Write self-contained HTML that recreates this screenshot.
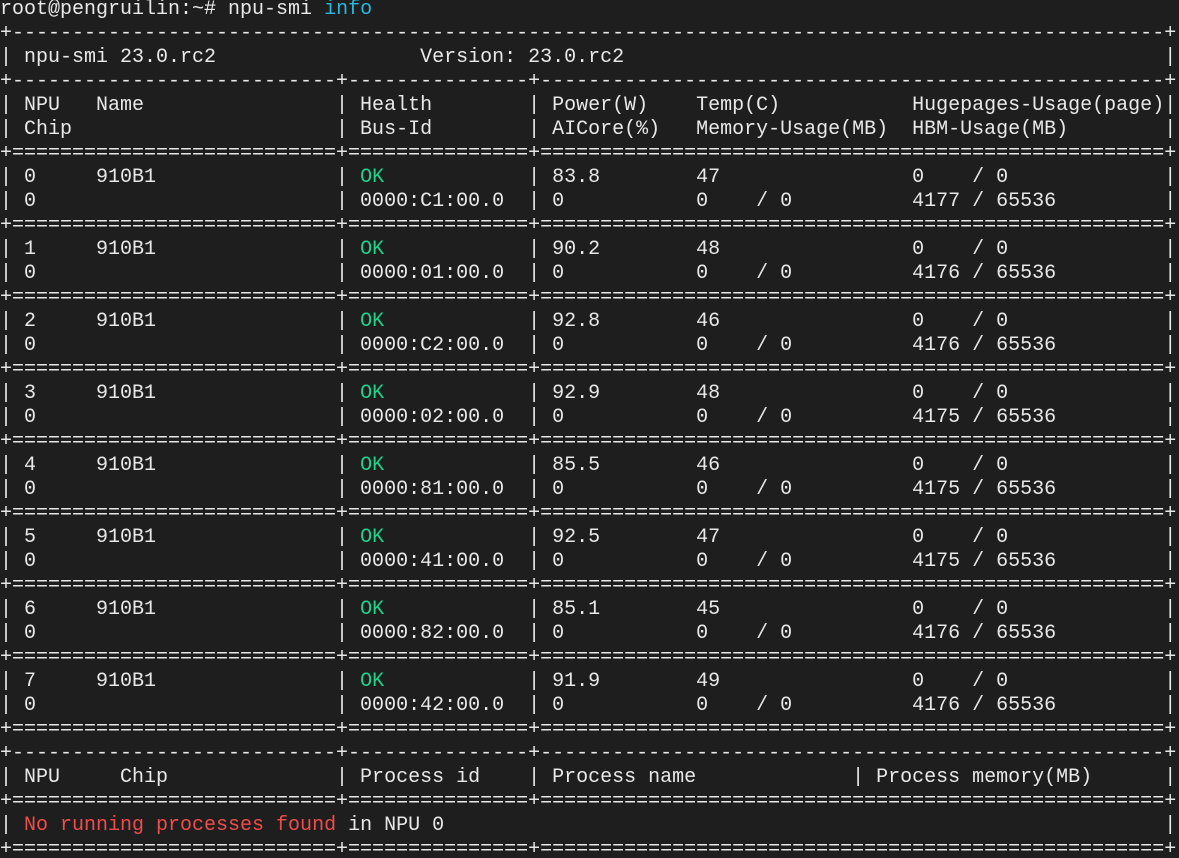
<!DOCTYPE html>
<html><head><meta charset="utf-8"><style>
html,body{margin:0;padding:0;background:#1e1e1e;width:1179px;height:858px;overflow:hidden}
pre{margin:-2px 0 0 0;padding:0;font-family:"Liberation Mono",monospace;font-size:20px;line-height:24px;color:#e8e8e8;white-space:pre}
.g{color:#23d18b}.b{color:#29b8db}.r{color:#f14c4c}
</style></head><body><pre>root@pengruilin:~# npu-smi <span class="b">info</span>
+------------------------------------------------------------------------------------------------+
| npu-smi 23.0.rc2                 Version: 23.0.rc2                                             |
+---------------------------+---------------+----------------------------------------------------+
| NPU   Name                | Health        | Power(W)    Temp(C)           Hugepages-Usage(page)|
| Chip                      | Bus-Id        | AICore(%)   Memory-Usage(MB)  HBM-Usage(MB)        |
+===========================+===============+====================================================+
| 0     910B1               | <span class="g">OK</span>            | 83.8        47                0    / 0             |
| 0                         | 0000:C1:00.0  | 0           0    / 0          4177 / 65536         |
+===========================+===============+====================================================+
| 1     910B1               | <span class="g">OK</span>            | 90.2        48                0    / 0             |
| 0                         | 0000:01:00.0  | 0           0    / 0          4176 / 65536         |
+===========================+===============+====================================================+
| 2     910B1               | <span class="g">OK</span>            | 92.8        46                0    / 0             |
| 0                         | 0000:C2:00.0  | 0           0    / 0          4176 / 65536         |
+===========================+===============+====================================================+
| 3     910B1               | <span class="g">OK</span>            | 92.9        48                0    / 0             |
| 0                         | 0000:02:00.0  | 0           0    / 0          4175 / 65536         |
+===========================+===============+====================================================+
| 4     910B1               | <span class="g">OK</span>            | 85.5        46                0    / 0             |
| 0                         | 0000:81:00.0  | 0           0    / 0          4175 / 65536         |
+===========================+===============+====================================================+
| 5     910B1               | <span class="g">OK</span>            | 92.5        47                0    / 0             |
| 0                         | 0000:41:00.0  | 0           0    / 0          4175 / 65536         |
+===========================+===============+====================================================+
| 6     910B1               | <span class="g">OK</span>            | 85.1        45                0    / 0             |
| 0                         | 0000:82:00.0  | 0           0    / 0          4176 / 65536         |
+===========================+===============+====================================================+
| 7     910B1               | <span class="g">OK</span>            | 91.9        49                0    / 0             |
| 0                         | 0000:42:00.0  | 0           0    / 0          4176 / 65536         |
+===========================+===============+====================================================+
+---------------------------+---------------+----------------------------------------------------+
| NPU     Chip              | Process id    | Process name             | Process memory(MB)      |
+===========================+===============+====================================================+
| <span class="r">No running processes found</span> in NPU 0                                                            |
+===========================+===============+====================================================+
</pre></body></html>
